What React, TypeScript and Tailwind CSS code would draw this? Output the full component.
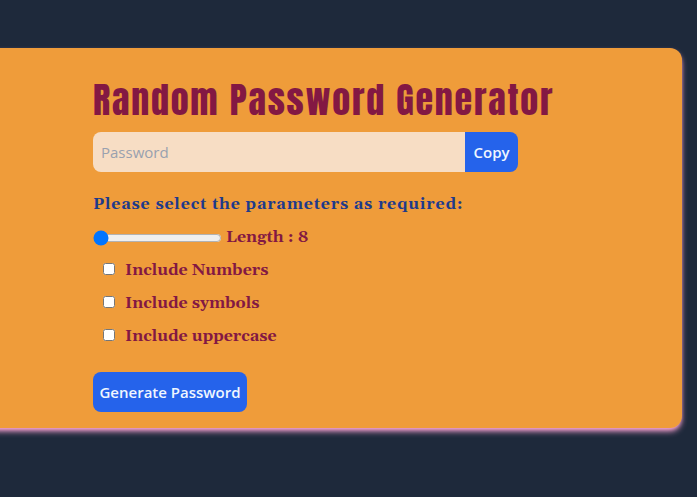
import { useState } from "react";

const options = ["Include Numbers", "Include symbols", "Include uppercase"];

export default function App() {
  const [length, setLength] = useState(8);
  const [password, setPassword] = useState("");
  const [checked, setChecked] = useState<boolean[]>([false, false, false]);

  const generate = () => {
    let chars = "abcdefghijklmnopqrstuvwxyz";
    if (checked[0]) chars += "0123456789";
    if (checked[1]) chars += "!@#$%^&*()_+";
    if (checked[2]) chars += "ABCDEFGHIJKLMNOPQRSTUVWXYZ";
    let next = "";
    for (let i = 0; i < length; i++) {
      next += chars[Math.floor(Math.random() * chars.length)];
    }
    setPassword(next);
  };

  return (
    <div className="min-h-screen overflow-x-hidden bg-[#1e293b] pt-12 pr-[15px] font-['Segoe_UI','Open_Sans','Noto_Sans',sans-serif]">
      <main className="-ml-4 rounded-xl bg-[#ef9c3a] pt-7 pr-8 pb-4 pl-[109px] shadow-md shadow-pink-300">
        <h1 className="font-['Anton','Liberation_Sans_Narrow',sans-serif] text-4xl leading-12 font-normal tracking-wider whitespace-nowrap text-[#831843]">
          Random Password Generator
        </h1>
        <div className="mt-2 flex h-10 max-w-[425px] overflow-hidden rounded-lg">
          <input
            type="text"
            aria-label="Password"
            placeholder="Password"
            readOnly
            value={password}
            className="min-w-0 flex-1 bg-[#f7ddc4] px-2 text-[15px] text-gray-800 outline-none placeholder:text-gray-400"
          />
          <button
            type="button"
            onClick={() => navigator.clipboard?.writeText(password)}
            className="w-[53px] bg-[#2563eb] text-[15px] font-semibold text-blue-50"
          >
            Copy
          </button>
        </div>
        <div className="font-['Gelasio','Georgia','DejaVu_Serif_Condensed','DejaVu_Serif',serif] text-base leading-6 font-bold text-[#831843]">
          <h2 className="mt-5 tracking-wider text-[#1e3a8a]">
            Please select the parameters as required:
          </h2>
          <div className="mt-[9px] flex items-center gap-1">
            <input
              id="length"
              type="range"
              min={8}
              max={32}
              value={length}
              onChange={(e) => setLength(Number(e.target.value))}
              className="mt-px w-[129px]"
            />
            <label htmlFor="length">Length : {length}</label>
          </div>
          {options.map((label, i) => (
            <div key={label} className="mt-[9px] flex items-start gap-[10px] pl-[10px]">
              <input
                id={label}
                type="checkbox"
                checked={checked[i]}
                onChange={() => setChecked(checked.map((c, j) => (j === i ? !c : c)))}
                className="mt-[5px] h-3 w-3"
              />
              <label htmlFor={label}>{label}</label>
            </div>
          ))}
        </div>
        <button
          type="button"
          onClick={generate}
          className="mt-6 h-10 w-[154px] rounded-lg bg-[#2563eb] text-[15px] font-semibold whitespace-nowrap text-blue-50"
        >
          Generate Password
        </button>
      </main>
    </div>
  );
}
